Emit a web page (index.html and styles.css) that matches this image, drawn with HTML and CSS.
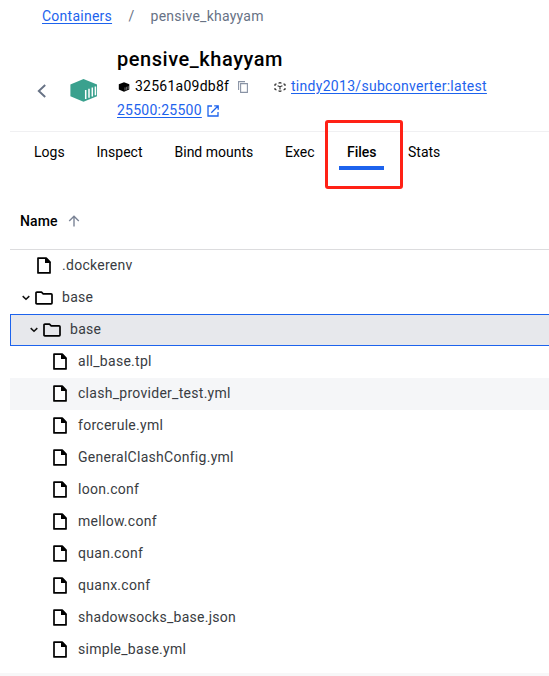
FILE: index.html
```html
<!DOCTYPE html>
<html lang="en">
<head>
<meta charset="utf-8">
<title>pensive_khayyam</title>
<link rel="stylesheet" href="styles.css">
</head>
<body>
<svg class="defs" width="0" height="0">
  <symbol id="file" viewBox="0 0 14 17"><path d="M1 1.1h8.2L13 5v10.9H1z" fill="#fff" stroke="#000" stroke-width="1.7" stroke-linejoin="round"/><path d="M8 .9h1.5L13.4 5v1.1H8z" fill="#000"/></symbol>
  <symbol id="folder" viewBox="0 0 18 14"><path d="M1.9 1.2h4.6l1.7 1.6h7.9q.9 0 .9.9v8.2q0 .9-.9.9H1.9q-.9 0-.9-.9V2.1q0-.9.9-.9z" fill="none" stroke="#000" stroke-width="1.7" stroke-linejoin="round"/></symbol>
  <symbol id="chevron" viewBox="0 0 8 6"><path d="M.7 1.1 4 4.3l3.3-3.2" fill="none" stroke="#111" stroke-width="1.5"/></symbol>
</svg>
<nav class="crumbs"><a href="#">Containers</a><span class="sep">/</span><span>pensive_khayyam</span></nav>
<header class="head">
  <svg class="back" width="10" height="14" viewBox="0 0 10 14"><path d="M8.2 1 1.8 7l6.4 6" fill="none" stroke="#677285" stroke-width="1.9"/></svg>
  <svg class="cube" width="28" height="24" viewBox="0 0 28 24"><path d="M13.5.9 27 6.4v11.8l-13.5 5.5L.4 18.2V6.4z" fill="#3aa18e"/><path d="M15.7 12v9M19 10.8v9M22.3 9.6v8.8M25.4 8.5v8.7" stroke="#fff" stroke-width="1.5"/></svg>
  <div class="info">
    <h1>pensive_khayyam</h1>
    <div class="meta">
      <svg class="id" width="12" height="10" viewBox="0 0 12 10"><path d="M6 .2l5.3 2v5.2L6 9.7.8 7.4V2.2z" fill="#000"/><path d="M7 5.4v3M8.6 4.8v3M10.2 4.2v2.8" stroke="#888" stroke-width=".8"/></svg>
      <span class="hash">32561a09db8f</span>
      <svg class="copy" width="10" height="12" viewBox="0 0 10 12"><path d="M.6 9V.6H7M2.6 2.6h6.8v8.8H2.6z" fill="none" stroke="#8993a5" stroke-width="1.1"/></svg>
      <svg class="image" width="12" height="10" viewBox="0 0 12 10"><path d="M4.5 1.2 6 .6l1.5.6M9.5 1.9l1.5.6v1.4M11 6v1.4l-1.5.6M7.5 8.8 6 9.4l-1.5-.6M2.5 8 1 7.4V6M1 3.9V2.5l1.5-.6M3.6 3.7 6 4.7l2.4-1M6 4.7v2.7" fill="none" stroke="#333" stroke-width="1.2"/></svg>
      <a class="repo" href="#">tindy2013/subconverter:latest</a>
    </div>
    <div class="ports"><a href="#">25500:25500</a><svg class="open" width="12" height="12" viewBox="0 0 12 12"><path d="M5 1H1v10h10V7M7.2.8h4v4M11 1 4.3 7.7" fill="none" stroke="#1d63ed" stroke-width="1.3"/></svg></div>
  </div>
</header>
<div class="tabs">
  <span class="t-logs">Logs</span><span class="t-inspect">Inspect</span><span class="t-mounts">Bind mounts</span><span class="t-exec">Exec</span><span class="t-files">Files</span><span class="t-stats">Stats</span>
  <div class="mark"></div>
</div>
<div class="thead"><span>Name</span><svg width="12" height="12" viewBox="0 0 12 12"><path d="M6 11.5V1.2M1.2 6 6 1.2 10.8 6" fill="none" stroke="#7b8496" stroke-width="1.4"/></svg></div>
<div class="tree">
  <div class="row l0"><svg class="file"><use href="#file"/></svg><span>.dockerenv</span></div>
  <div class="row l0 dir"><svg class="chev"><use href="#chevron"/></svg><svg class="folder"><use href="#folder"/></svg><span>base</span></div>
  <div class="row l1 dir selected"><svg class="chev"><use href="#chevron"/></svg><svg class="folder"><use href="#folder"/></svg><span>base</span></div>
  <div class="row l2"><svg class="file"><use href="#file"/></svg><span>all_base.tpl</span></div>
  <div class="row l2 hover"><svg class="file"><use href="#file"/></svg><span>clash_provider_test.yml</span></div>
  <div class="row l2"><svg class="file"><use href="#file"/></svg><span>forcerule.yml</span></div>
  <div class="row l2"><svg class="file"><use href="#file"/></svg><span>GeneralClashConfig.yml</span></div>
  <div class="row l2"><svg class="file"><use href="#file"/></svg><span>loon.conf</span></div>
  <div class="row l2"><svg class="file"><use href="#file"/></svg><span>mellow.conf</span></div>
  <div class="row l2"><svg class="file"><use href="#file"/></svg><span>quan.conf</span></div>
  <div class="row l2"><svg class="file"><use href="#file"/></svg><span>quanx.conf</span></div>
  <div class="row l2"><svg class="file"><use href="#file"/></svg><span>shadowsocks_base.json</span></div>
  <div class="row l2"><svg class="file"><use href="#file"/></svg><span>simple_base.yml</span></div>
</div>
<div class="foot"></div>
</body>
</html>
```
FILE: styles.css
```css
* { box-sizing: border-box; }
body { margin: 0; width: 549px; height: 676px; overflow: hidden; background: #fff; color: #000; font: 14px/20px Roboto, sans-serif; }
svg { display: block; flex: none; }
.defs { position: absolute; }
a { color: #1d63ed; text-decoration: underline; text-underline-offset: 2px; }
.crumbs { display: flex; height: 32px; padding: 6px 0 0 42px; color: #677285; letter-spacing: .25px; }
.sep { width: 38.5px; padding-left: 16.5px; }
.head { display: flex; height: 99px; padding-left: 37px; }
.back { margin-top: 52px; }
.cube { margin: 46px 0 0 23px; }
.info { padding: 15px 0 0 19px; }
h1 { margin: 0; font-size: 20px; line-height: 24px; font-weight: 500; letter-spacing: .55px; }
.meta { display: flex; align-items: center; height: 24px; margin-top: 3px; padding-left: 1px; }
.id, .image { margin-top: 1px; }
.hash { width: 108px; padding-left: 5px; letter-spacing: .25px; }
.copy { margin-top: 1px; }
.image { margin-right: 5px; margin-left: 26px; }
.repo { letter-spacing: .29px; }
.ports a { letter-spacing: .25px; }
.ports { display: flex; align-items: center; height: 24px; gap: 5px; }
.open { margin-top: 1px; }
.tabs { position: relative; display: flex; height: 62px; margin-left: 10px; padding: 10px 0 0 24px; border-top: 1px solid #f0f0f2; }
.t-logs { width: 62.5px; }
.t-inspect { width: 78px; }
.t-mounts { width: 110.5px; }
.t-exec { width: 54px; }
.t-files { width: 45px; height: 28px; padding-left: 8px; border-bottom: 4px solid #1d63ed; font-weight: 500; }
.t-stats { padding-left: 24px; }
.mark { position: absolute; left: 314.5px; top: -12.5px; width: 78.5px; height: 69px; border: 3px solid #ff2116; border-radius: 3px; }
.thead { display: flex; align-items: center; gap: 10.5px; height: 57px; margin-left: 10px; padding-left: 10px; border-bottom: 1px solid #dcdcde; font-weight: 500; letter-spacing: .1px; }
.tree { margin-left: 10px; }
.row { display: flex; align-items: center; height: 32px; color: #393c42; letter-spacing: .28px; }
.row span { line-height: 20px; margin-top: -2px; }
.l0 { padding-left: 27px; }
.l2 { padding-left: 43px; }
.l0.dir { padding-left: 12px; }
.l1.dir { padding-left: 19px; }
.file { width: 14px; height: 17px; margin-right: 11px; margin-top: -1px; }
.chev { width: 8px; height: 6px; margin-right: 5px; }
.folder { width: 18px; height: 14px; margin-right: 9px; }
.selected { border: 1px solid #1d63ed; border-right: 0; background: #e7e8ec; }
.hover { background: #f5f6f8; }
.foot { height: 3px; margin-top: 7px; background: #f7f7f8; }
```
